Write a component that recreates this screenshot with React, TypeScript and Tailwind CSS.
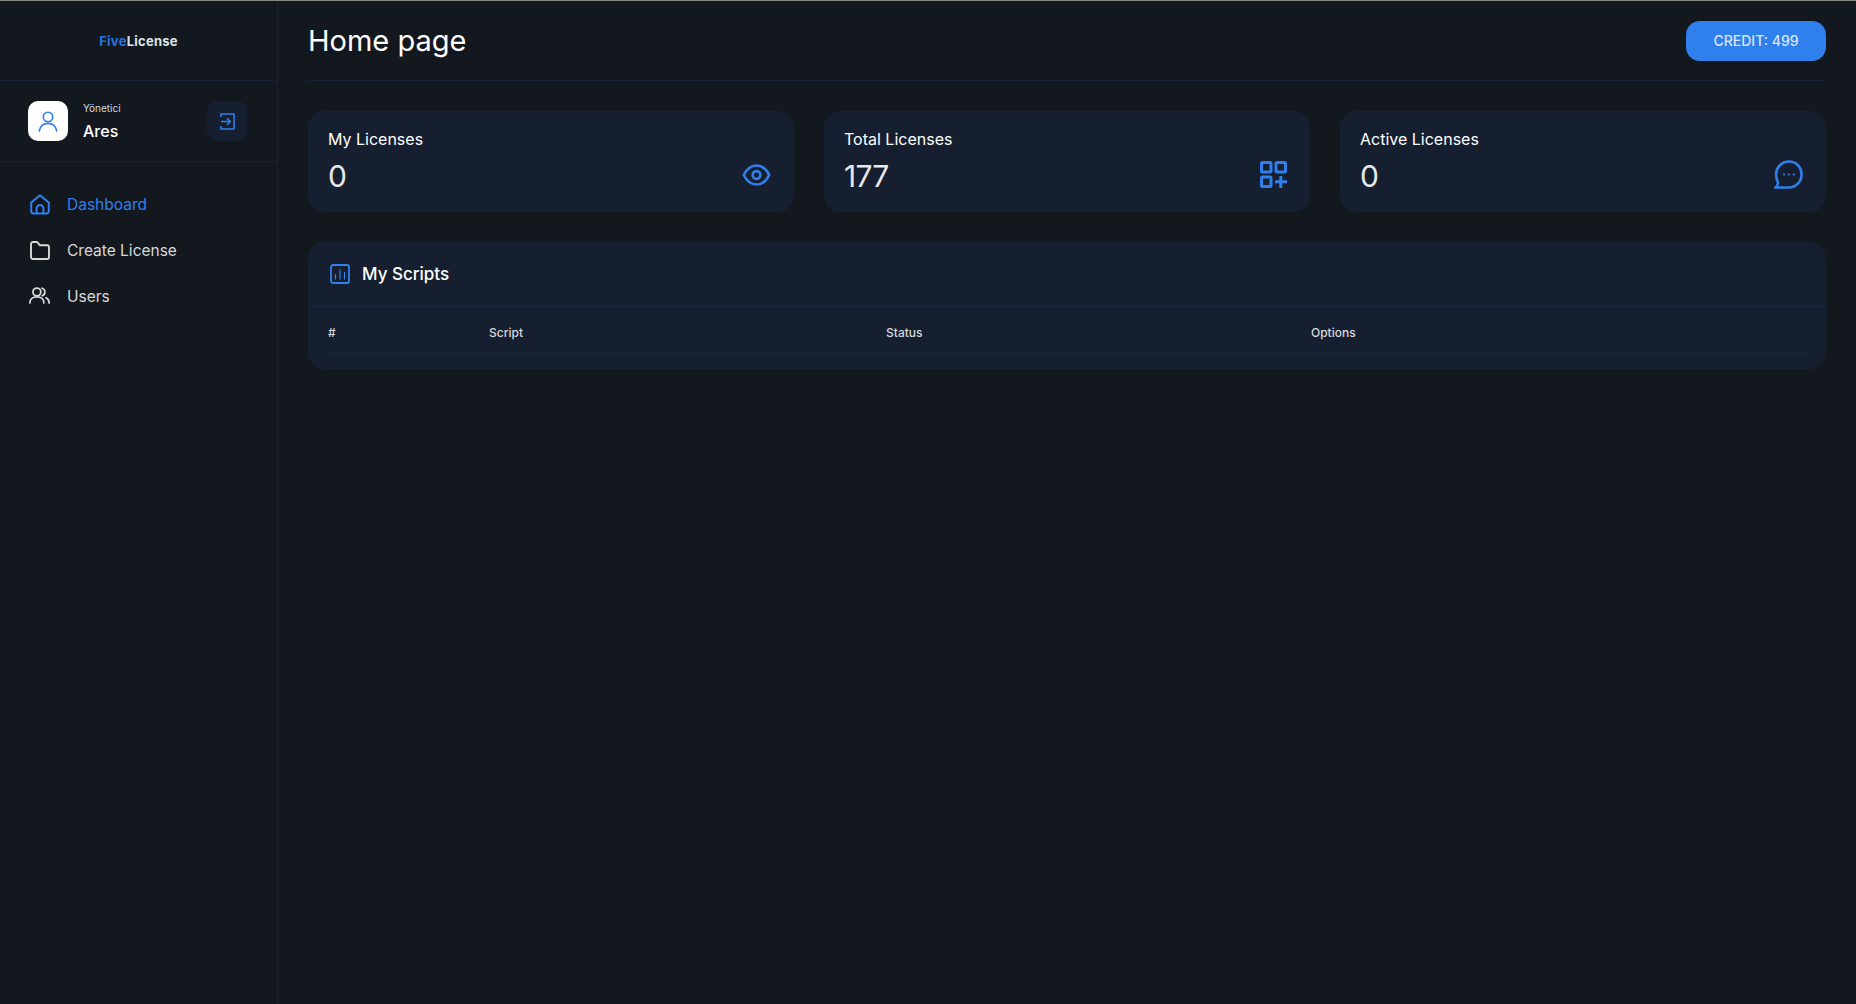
import React from "react";

type Stat = {
  label: string;
  value: string;
  icon: React.ReactNode;
};

const EyeIcon = () => (
  <svg className="mb-[1px]" width="29" height="24" viewBox="0 0 30 24" fill="none" stroke="#2f80ed" strokeWidth="2.7" strokeLinejoin="round">
    <path d="M1.8 12C5 5.6 9.6 2.2 15 2.2S25 5.6 28.2 12C25 18.4 20.4 21.8 15 21.8S5 18.4 1.8 12Z" />
    <circle cx="15" cy="12" r="4" />
  </svg>
);

const GridPlusIcon = () => (
  <svg width="27" height="27" viewBox="0 0 27 27" fill="none" stroke="#2f80ed" strokeWidth="3">
    <rect x="1.5" y="1.5" width="9.5" height="9.5" rx="1" />
    <rect x="16" y="1.5" width="9.5" height="9.5" rx="1" />
    <rect x="1.5" y="16" width="9.5" height="9.5" rx="1" />
    <path d="M15 20.8H27M20.8 15V27" />
  </svg>
);

const ChatIcon = () => (
  <svg className="-mb-[1px]" width="29" height="29" viewBox="0 0 28 28" fill="none" stroke="#2f80ed" strokeWidth="2.5" strokeLinecap="round">
    <path d="M14.5 1.5C21.2 1.5 26.6 6.9 26.6 13.9S21.2 26.6 14.5 26.6H1.6C3.4 25 4 23.6 3.7 21.4 2.6 19.4 2 16.8 2 14 2 6.9 7.7 1.5 14.5 1.5Z" />
    <path d="M9.5 14H9.7M14.3 14H14.5M19 14H19.2" strokeWidth="2" />
  </svg>
);

const ChartIcon = () => (
  <svg width="20" height="20" viewBox="0 0 20 20" fill="none" stroke="#2f80ed">
    <rect x="1" y="1" width="18" height="18" rx="2" strokeWidth="1.8" />
    <path d="M5.5 10V15.5M10 5.5V15.5M14.5 8V15.5" strokeWidth="1.2" />
  </svg>
);

const HomeIcon = () => (
  <svg className="mb-[2px]" width="20" height="21" viewBox="0 0 20 21" fill="none" stroke="currentColor" strokeWidth="2" strokeLinejoin="round">
    <path d="M1.2 8.6 10 1.3l8.8 7.3V17a2.6 2.6 0 0 1-2.6 2.6H3.8A2.6 2.6 0 0 1 1.2 17Z" />
    <path d="M6.6 19.6v-5.2a3.4 3.4 0 0 1 6.8 0v5.2" />
  </svg>
);

const FolderIcon = () => (
  <svg className="mb-[2px]" width="20" height="19" viewBox="0 0 20 19" fill="none" stroke="currentColor" strokeWidth="1.9" strokeLinejoin="round">
    <path d="M1 3a2 2 0 0 1 2-2h4.2l2.6 3.2H17a2 2 0 0 1 2 2V16a2 2 0 0 1-2 2H3a2 2 0 0 1-2-2Z" />
  </svg>
);

const UsersIcon = () => (
  <svg className="mb-[3px]" width="24" height="19" viewBox="0 0 24 19" fill="none" stroke="currentColor" strokeWidth="2" strokeLinecap="round">
    <circle cx="9" cy="5.5" r="4.5" />
    <path d="M1 18c0-4.3 3.4-6.800 8-6.800s8 2.500 8 6.800" />
    <path d="M15 1.200a4.500 4.500 0 0 1 0 8.600M19.500 12c2.200 1 3.500 3.100 3.500 6" />
  </svg>
);

const UserIcon = () => (
  <svg width="20" height="21" viewBox="0 0 22 23" fill="none" stroke="#2f80ed" strokeWidth="1.8" strokeLinecap="round">
    <circle cx="11" cy="6.5" r="5.2" />
    <path d="M1.4 22c.6-5 4.600-8.500 9.600-8.500s9 3.500 9.600 8.500" />
  </svg>
);

const LogoutIcon = () => (
  <svg width="15" height="17" viewBox="0 0 15 17" fill="none" stroke="#2f80ed" strokeWidth="1.6">
    <path d="M1 4V1h12.500a.6.6 0 0 1 .6.6v13.800a.6.6 0 0 1-.6.6H1v-3" />
    <path d="M1 8.500h9M7 5.300l3.200 3.200L7 11.700" />
  </svg>
);

const stats: Stat[] = [
  { label: "My Licenses", value: "0", icon: <EyeIcon /> },
  { label: "Total Licenses", value: "177", icon: <GridPlusIcon /> },
  { label: "Active Licenses", value: "0", icon: <ChatIcon /> },
];

const NavItem = ({ icon, label, active }: { icon: React.ReactNode; label: string; active?: boolean }) => (
  <a className={`flex h-[46px] items-center gap-[17px] pl-[29px] text-[15.5px] ${active ? "text-[#2f80ed]" : "text-[#d8d8d8]"}`}>
    <span className="flex w-[21px] justify-center">{icon}</span>
    {label}
  </a>
);

const App = () => {
  return (
    <div className="flex h-screen overflow-hidden border-t border-[#8a8a8a] bg-[#13181f] font-['Inter',sans-serif] text-white">
      <aside className="w-[278px] shrink-0 border-r border-[#182133]">
        <div className="flex h-[80px] items-center justify-center border-b border-[#182133] pt-[3px] text-[13px] font-bold tracking-[0.25px]">
          <span className="text-[#2275e0]">Five</span>
          <span className="text-[#dfe3e8]">License</span>
        </div>
        <div className="flex h-[81px] items-center border-b border-[#182133] pl-[28px] pr-[30px]">
          <div className="flex h-[40px] w-[40px] items-center justify-center rounded-[10px] bg-white">
            <UserIcon />
          </div>
          <div className="ml-[15px] flex-1">
            <div className="text-[10px] leading-[14px] text-[#d5d8dc]">Yönetici</div>
            <div className="mt-[6px] text-[16px] font-medium leading-[20px]">Ares</div>
          </div>
          <button className="flex h-[40px] w-[40px] items-center justify-center rounded-[10px] bg-[#161f2f]">
            <LogoutIcon />
          </button>
        </div>
        <nav className="mt-[20px] flex flex-col">
          <NavItem icon={<HomeIcon />} label="Dashboard" active />
          <NavItem icon={<FolderIcon />} label="Create License" />
          <NavItem icon={<UsersIcon />} label="Users" />
        </nav>
      </aside>

      <main className="flex-1 px-[30px]">
        <header className="flex h-[80px] items-center justify-between border-b border-[#182133]">
          <h1 className="text-[29px] font-normal leading-[40px]">Home page</h1>
          <div className="flex h-[40px] w-[140px] items-center justify-center rounded-[14px] bg-[#2f80ed] text-[14px] font-medium text-[#dbe6f5]">
            CREDIT: 499
          </div>
        </header>

        <section className="mt-[30px] grid grid-cols-3 gap-[30px]">
          {stats.map((stat) => (
            <div key={stat.label} className="flex h-[101px] items-end justify-between rounded-[16px] bg-[#161f2f] pb-[18px] pl-[20px] pr-[23px]">
              <div>
                <div className="text-[16px] leading-[24px]">{stat.label}</div>
                <div className="mt-[7px] text-[30px] leading-[36px] tracking-[-0.8px] text-[#e8e8e8]">{stat.value}</div>
              </div>
              <div className="mb-[6px] flex justify-end">{stat.icon}</div>
            </div>
          ))}
        </section>

        <section className="mt-[30px] rounded-[16px] bg-[#161f2f] pb-[15px]">
          <div className="flex h-[65px] items-center gap-[12px] border-b border-[#1a2740] px-[22px]">
            <ChartIcon />
            <h2 className="pt-[1px] text-[17px] font-medium">My Scripts</h2>
          </div>
          <div className="mx-[20px] grid h-[47px] grid-cols-[161px_397px_425px_1fr] items-center border-b border-[#1a2740] pt-[6px] text-[12px] font-medium text-[#d5d8dc]">
            <span>#</span>
            <span>Script</span>
            <span>Status</span>
            <span>Options</span>
          </div>
        </section>
      </main>
    </div>
  );
};

export default App;
